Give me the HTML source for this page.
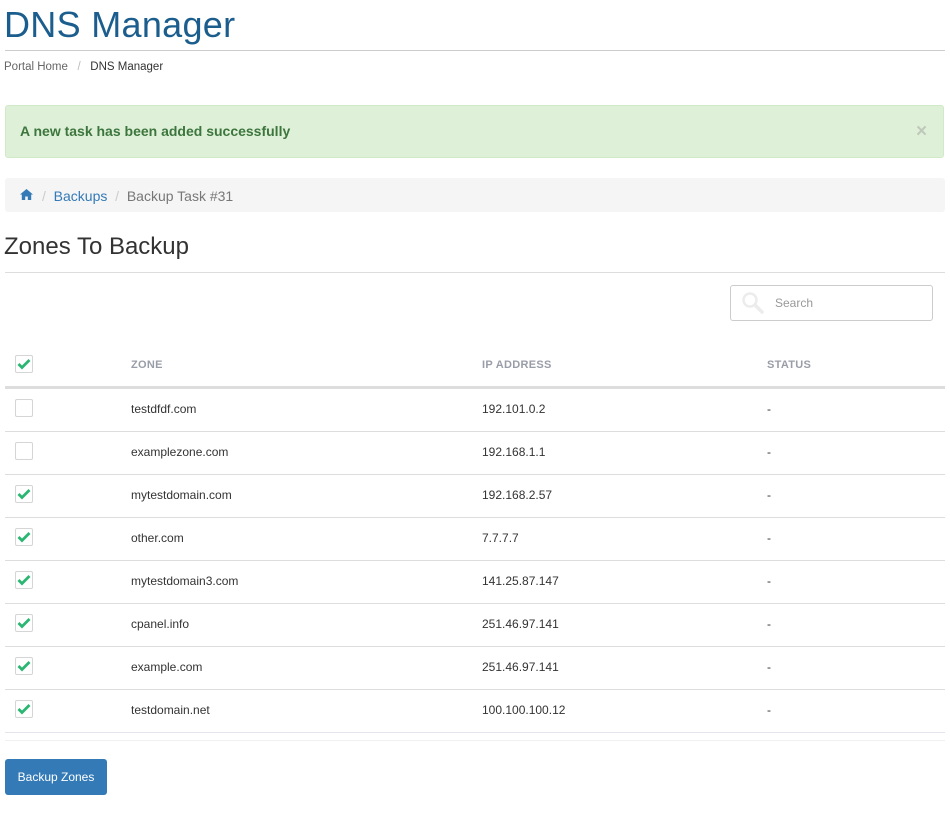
<!DOCTYPE html><html><head><style>
body{margin:0;background:#fff;font-family:"Liberation Sans",sans-serif;width:950px;height:820px;position:relative;overflow:hidden}
.a{position:absolute}
.cb{position:absolute;left:15px;width:16px;height:16px;border:1px solid #d5d5d5;border-radius:2px;background:#fff}
.cb svg{position:absolute;left:1px;top:2px}
.row{position:absolute;left:5px;width:940px;height:42px;border-bottom:1px solid #ddd;font-size:12px;color:#333}
.row span{position:absolute;top:13px}
.h{position:absolute;top:359px;font-size:11px;font-weight:bold;color:#999da8;letter-spacing:0.3px}
</style></head><body>
<div class="a" style="left:4px;top:4px;font-size:36px;color:#1b5e8e;letter-spacing:0.3px">DNS Manager</div>
<div class="a" style="left:5px;top:50px;width:940px;height:1px;background:#ccc"></div>
<div class="a" style="left:4px;top:61px;font-size:11.5px;color:#666">Portal Home &nbsp; <span style="color:#bbb">/</span> &nbsp; <span style="color:#333">DNS Manager</span></div>
<div class="a" style="left:5px;top:105px;width:937px;height:51px;background:#dff0d8;border:1px solid #d0e9c6;border-radius:3px"></div>
<div class="a" style="left:20px;top:123px;font-size:14px;font-weight:bold;color:#3c763d">A new task has been added successfully</div>
<div class="a" style="left:916px;top:121px;font-size:19px;font-weight:bold;color:#bfc9bb">×</div>
<div class="a" style="left:5px;top:178px;width:940px;height:34px;background:#f5f5f5;border-radius:3px"></div>
<svg class="a" style="left:20px;top:189px" width="13" height="11" viewBox="0 0 13 11"><path d="M6.5 0L0 5.5h1.8V11h3.4V7.5h2.6V11h3.4V5.5H13z" fill="#337ab7"/></svg>
<div class="a" style="left:42px;top:188px;font-size:14px;color:#ccc">/ &nbsp;<span style="color:#337ab7">Backups</span> &nbsp;/ &nbsp;<span style="color:#777">Backup Task #31</span></div>
<div class="a" style="left:4px;top:233px;font-size:24px;color:#333">Zones To Backup</div>
<div class="a" style="left:5px;top:272px;width:940px;height:1px;background:#ddd"></div>
<div class="a" style="left:730px;top:285px;width:201px;height:34px;border:1px solid #ccc;border-radius:3px"></div>
<svg class="a" style="left:741px;top:291px" width="24" height="24" viewBox="0 0 24 24"><circle cx="9" cy="9" r="6.5" fill="none" stroke="#ececec" stroke-width="2.5"/><path d="M14 14l7 7" stroke="#ececec" stroke-width="3.5" stroke-linecap="round"/></svg>
<div class="a" style="left:775px;top:296px;font-size:12px;color:#999">Search</div>
<div class="cb" style="top:355px"><svg width="14" height="12" viewBox="0 0 14 12"><path d="M1.5 6l3.5 3.5L12.5 2" fill="none" stroke="#2bb673" stroke-width="2.8"/></svg></div>
<div class="h" style="left:131px">ZONE</div>
<div class="h" style="left:482px">IP ADDRESS</div>
<div class="h" style="left:767px">STATUS</div>
<div class="a" style="left:5px;top:386px;width:940px;height:3px;background:#ddd"></div>
<div class="row" style="top:389px"><span style="left:126px">testdfdf.com</span><span style="left:477px">192.101.0.2</span><span style="left:762px">-</span></div>
<div class="row" style="top:432px"><span style="left:126px">examplezone.com</span><span style="left:477px">192.168.1.1</span><span style="left:762px">-</span></div>
<div class="row" style="top:475px"><span style="left:126px">mytestdomain.com</span><span style="left:477px">192.168.2.57</span><span style="left:762px">-</span></div>
<div class="row" style="top:518px"><span style="left:126px">other.com</span><span style="left:477px">7.7.7.7</span><span style="left:762px">-</span></div>
<div class="row" style="top:561px"><span style="left:126px">mytestdomain3.com</span><span style="left:477px">141.25.87.147</span><span style="left:762px">-</span></div>
<div class="row" style="top:604px"><span style="left:126px">cpanel.info</span><span style="left:477px">251.46.97.141</span><span style="left:762px">-</span></div>
<div class="row" style="top:647px"><span style="left:126px">example.com</span><span style="left:477px">251.46.97.141</span><span style="left:762px">-</span></div>
<div class="row" style="top:690px;border-bottom-color:#e4e4ee"><span style="left:126px">testdomain.net</span><span style="left:477px">100.100.100.12</span><span style="left:762px">-</span></div>
<div class="cb" style="top:399px"></div>
<div class="cb" style="top:442px"></div>
<div class="cb" style="top:485px"><svg width="14" height="12" viewBox="0 0 14 12"><path d="M1.5 6l3.5 3.5L12.5 2" fill="none" stroke="#2bb673" stroke-width="2.8"/></svg></div>
<div class="cb" style="top:528px"><svg width="14" height="12" viewBox="0 0 14 12"><path d="M1.5 6l3.5 3.5L12.5 2" fill="none" stroke="#2bb673" stroke-width="2.8"/></svg></div>
<div class="cb" style="top:571px"><svg width="14" height="12" viewBox="0 0 14 12"><path d="M1.5 6l3.5 3.5L12.5 2" fill="none" stroke="#2bb673" stroke-width="2.8"/></svg></div>
<div class="cb" style="top:614px"><svg width="14" height="12" viewBox="0 0 14 12"><path d="M1.5 6l3.5 3.5L12.5 2" fill="none" stroke="#2bb673" stroke-width="2.8"/></svg></div>
<div class="cb" style="top:657px"><svg width="14" height="12" viewBox="0 0 14 12"><path d="M1.5 6l3.5 3.5L12.5 2" fill="none" stroke="#2bb673" stroke-width="2.8"/></svg></div>
<div class="cb" style="top:700px"><svg width="14" height="12" viewBox="0 0 14 12"><path d="M1.5 6l3.5 3.5L12.5 2" fill="none" stroke="#2bb673" stroke-width="2.8"/></svg></div>
<div class="a" style="left:5px;top:740px;width:940px;height:1px;background:#f0f0f0"></div>
<div class="a" style="left:5px;top:759px;width:102px;height:36px;background:#337ab7;border-radius:3px;color:#fff;font-size:12px;line-height:36px;text-align:center">Backup Zones</div>
</body></html>
